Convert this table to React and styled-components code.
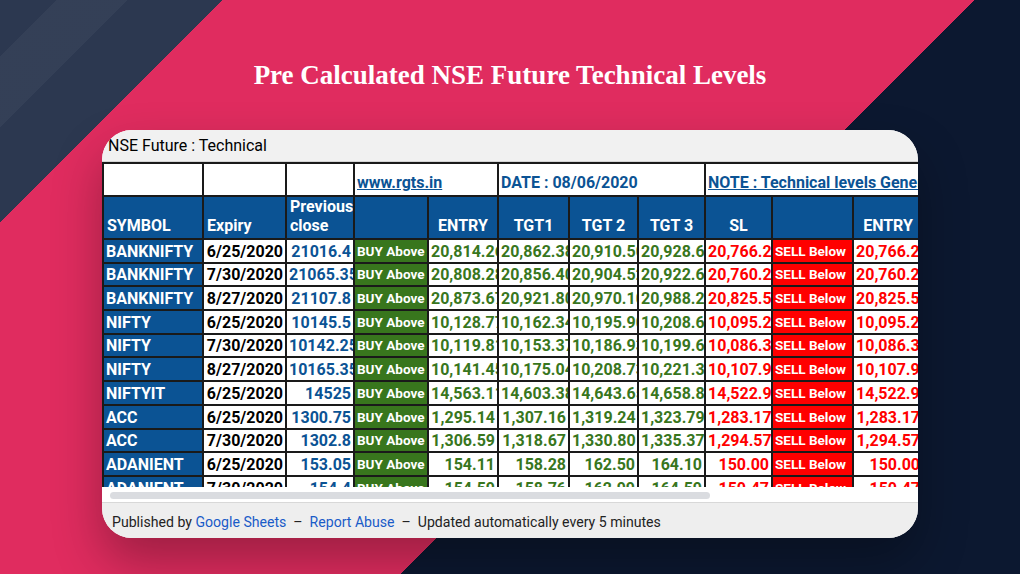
import styled, { createGlobalStyle } from "styled-components";

const Global = createGlobalStyle`
  html, body {
    margin: 0;
    padding: 0;
  }
  body {
    font-family: Roboto, "Liberation Sans", Arial, sans-serif;
  }
`;

const BLUE = "#0b5394";
const GREEN = "#38761d";
const RED = "#ff0000";

const Page = styled.div`
  width: 1020px;
  height: 574px;
  overflow: hidden;
  display: flex;
  flex-direction: column;
  align-items: center;
  background:
    linear-gradient(135deg, transparent 0 40px, rgba(255, 255, 255, 0.04) 40px 90px, transparent 90px),
    linear-gradient(135deg, #2c3850 0 157px, #e02c5f 157px 689px, #0c1830 689px);
`;

const Title = styled.h1`
  margin: 0;
  height: 130px;
  padding-top: 20px;
  box-sizing: border-box;
  display: flex;
  align-items: center;
  font-family: "Liberation Serif", "DejaVu Serif", serif;
  font-weight: 700;
  font-size: 27px;
  color: #fff;
`;

const Card = styled.div`
  width: 816px;
  height: 408px;
  border-radius: 30px;
  overflow: hidden;
  background: #fff;
  display: flex;
  flex-direction: column;
  box-shadow: 0 24px 50px rgba(0, 0, 0, 0.3);
`;

const CardHeader = styled.div`
  height: 31px;
  flex: none;
  line-height: 32px;
  padding-left: 6px;
  background: #f1f1f1;
  border-bottom: 1px solid #d4d4d4;
  font-size: 16px;
  color: #000;
`;

const Viewport = styled.div`
  height: 325px;
  flex: none;
  overflow: hidden;
  background: #fff;
`;

const Sheet = styled.table`
  border-collapse: collapse;
  table-layout: fixed;
  width: 1100px;
  font-family: Roboto, "Liberation Sans", Arial, sans-serif;
  font-weight: 700;
  font-size: 16px;
`;

const Row = styled.tr`
  height: ${(p) => p.$h}px;
`;

const Cell = styled.td`
  border: 2px solid #1a1a1a;
  padding: 0 2px 1px;
  vertical-align: bottom;
  overflow: hidden;
  white-space: nowrap;
  line-height: 19px;
  text-align: ${(p) => p.$align || "right"};
  background: ${(p) => p.$bg || "#fff"};
  color: ${(p) => p.$color || "#000"};
  font-size: ${(p) => (p.$small ? "13.5px" : "16px")};
`;

const LinkCell = styled(Cell)`
  text-align: left;
  color: ${BLUE};
  text-decoration: ${(p) => (p.$link ? "underline" : "none")};
  padding-bottom: 3px;
`;

const HeadCell = styled.th`
  border: 2px solid #1a1a1a;
  padding: 0 3px 3px;
  vertical-align: bottom;
  overflow: hidden;
  background: ${BLUE};
  color: #fff;
  font-weight: 700;
  font-size: 16px;
  line-height: 19px;
  text-align: ${(p) => p.$align || "center"};
`;

const ScrollTrack = styled.div`
  height: 16px;
  flex: none;
  box-sizing: border-box;
  padding: 5px 0 0 8px;
  background: #fff;
  border-bottom: 1px solid #d8d8d8;
`;

const Thumb = styled.div`
  width: 600px;
  height: 7px;
  border-radius: 4px;
  background: #dadce0;
`;

const Footer = styled.div`
  flex: 1;
  display: flex;
  align-items: center;
  padding: 2px 0 0 10px;
  background: #eeeeee;
  font-size: 14.1px;
  color: #222;
  gap: 7px;
`;

const FooterLink = styled.span`
  color: #1a5bc8;
`;

const widths = [100, 83, 68, 74, 70, 71, 69, 67, 67, 81, 70, 70, 70, 70, 70];

const rows = [
  ["BANKNIFTY", "6/25/2020", "21016.4", "20,814.26", "20,862.38", "20,910.50", "20,928.62", "20,766.22"],
  ["BANKNIFTY", "7/30/2020", "21065.35", "20,808.28", "20,856.40", "20,904.52", "20,922.64", "20,760.25"],
  ["BANKNIFTY", "8/27/2020", "21107.8", "20,873.67", "20,921.80", "20,970.10", "20,988.21", "20,825.55"],
  ["NIFTY", "6/25/2020", "10145.5", "10,128.77", "10,162.34", "10,195.90", "10,208.63", "10,095.21"],
  ["NIFTY", "7/30/2020", "10142.25", "10,119.81", "10,153.37", "10,186.93", "10,199.66", "10,086.30"],
  ["NIFTY", "8/27/2020", "10165.35", "10,141.45", "10,175.04", "10,208.73", "10,221.36", "10,107.97"],
  ["NIFTYIT", "6/25/2020", "14525", "14,563.11", "14,603.38", "14,643.65", "14,658.81", "14,522.94"],
  ["ACC", "6/25/2020", "1300.75", "1,295.14", "1,307.16", "1,319.24", "1,323.79", "1,283.17"],
  ["ACC", "7/30/2020", "1302.8", "1,306.59", "1,318.67", "1,330.80", "1,335.37", "1,294.57"],
  ["ADANIENT", "6/25/2020", "153.05", "154.11", "158.28", "162.50", "164.10", "150.00"],
  ["ADANIENT", "7/30/2020", "154.4", "154.59", "158.76", "162.99", "164.59", "150.47"],
];

export default function App() {
  return (
    <Page>
      <Global />
      <Title>Pre Calculated NSE Future Technical Levels</Title>
      <Card>
        <CardHeader>NSE Future : Technical</CardHeader>
        <Viewport>
          <Sheet>
            <colgroup>
              {widths.map((w, i) => (
                <col key={i} style={{ width: w }} />
              ))}
            </colgroup>
            <tbody>
              <Row $h={33}>
                <Cell />
                <Cell />
                <Cell />
                <LinkCell colSpan={2} $link>www.rgts.in</LinkCell>
                <LinkCell colSpan={3}>DATE : 08/06/2020</LinkCell>
                <LinkCell colSpan={7} $link>NOTE : Technical levels Generated by algorithm</LinkCell>
              </Row>
              <Row $h={43}>
                <HeadCell $align="left">SYMBOL</HeadCell>
                <HeadCell $align="left">Expiry</HeadCell>
                <HeadCell $align="left">Previous close</HeadCell>
                <HeadCell />
                <HeadCell>ENTRY</HeadCell>
                <HeadCell>TGT1</HeadCell>
                <HeadCell>TGT 2</HeadCell>
                <HeadCell>TGT 3</HeadCell>
                <HeadCell>SL</HeadCell>
                <HeadCell />
                <HeadCell>ENTRY</HeadCell>
                <HeadCell>TGT1</HeadCell>
                <HeadCell>TGT 2</HeadCell>
                <HeadCell>TGT 3</HeadCell>
                <HeadCell>SL</HeadCell>
              </Row>
              {rows.map((r, i) => (
                <Row key={i} $h={23.7}>
                  <Cell $align="left" $bg={BLUE} $color="#fff">{r[0]}</Cell>
                  <Cell>{r[1]}</Cell>
                  <Cell $color={BLUE}>{r[2]}</Cell>
                  <Cell $align="left" $bg={GREEN} $color="#fff" $small>BUY Above</Cell>
                  <Cell $color={GREEN}>{r[3]}</Cell>
                  <Cell $color={GREEN}>{r[4]}</Cell>
                  <Cell $color={GREEN}>{r[5]}</Cell>
                  <Cell $color={GREEN}>{r[6]}</Cell>
                  <Cell $color={RED}>{r[7]}</Cell>
                  <Cell $align="left" $bg={RED} $color="#fff" $small>SELL Below</Cell>
                  <Cell $color={RED}>{r[7]}</Cell>
                  <Cell $color={RED}>{r[7]}</Cell>
                  <Cell $color={RED}>{r[7]}</Cell>
                  <Cell $color={RED}>{r[7]}</Cell>
                  <Cell $color={RED}>{r[7]}</Cell>
                </Row>
              ))}
            </tbody>
          </Sheet>
        </Viewport>
        <ScrollTrack>
          <Thumb />
        </ScrollTrack>
        <Footer>
          <span>
            Published by <FooterLink>Google Sheets</FooterLink>
          </span>
          <span>–</span>
          <FooterLink>Report Abuse</FooterLink>
          <span>–</span>
          <span>Updated automatically every 5 minutes</span>
        </Footer>
      </Card>
    </Page>
  );
}
